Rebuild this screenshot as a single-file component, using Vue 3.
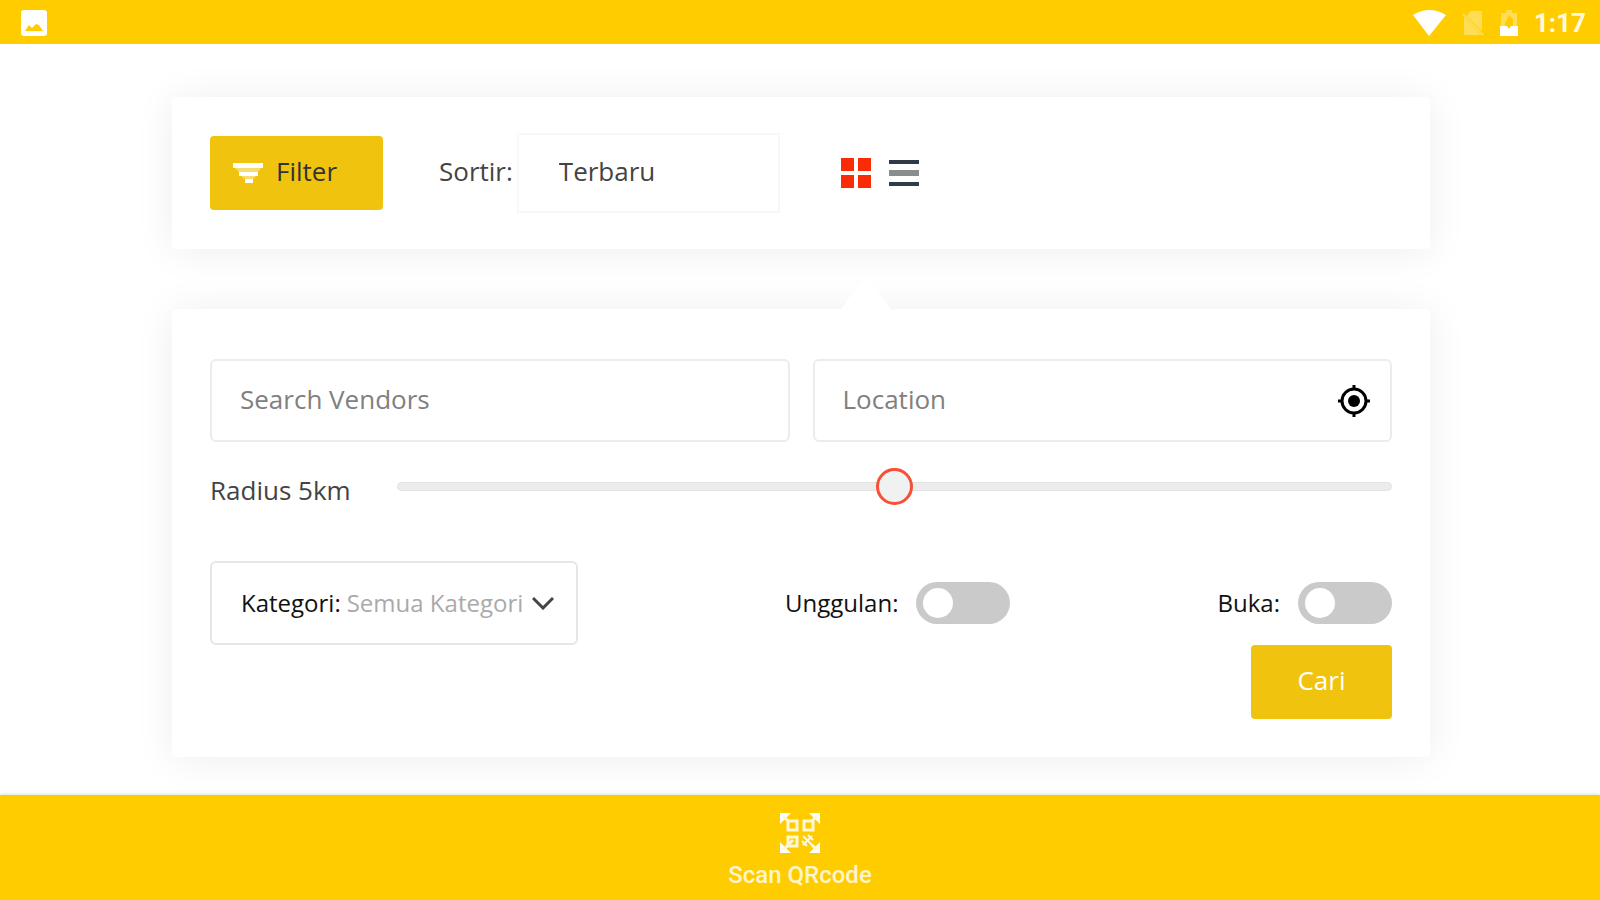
<template>
  <div class="app">
    <header class="status-bar">
      <svg class="status-photo" viewBox="0 0 26 26" aria-hidden="true">
        <rect x="0" y="0" width="26" height="26" rx="3" fill="#fff" />
        <path d="M4 21 L8 15 L11 18 L15 14 L18 15 L22 21 Z" fill="#ffcc00" />
      </svg>
      <div class="status-icons">
        <svg class="wifi" viewBox="0 0 33 26" aria-hidden="true">
          <path d="M0 5 Q16 -5 33 5 L16 26 Z" fill="#fff" />
        </svg>
        <svg class="sim" viewBox="0 0 22 26" aria-hidden="true">
          <path d="M8 1 H20 V21 L5 6 Z M2 7 L19 25 H2 Z" fill="#ffdd55" />
          <path d="M1 4 L21 25" stroke="#ffdd55" stroke-width="2" />
        </svg>
        <svg class="battery" viewBox="0 0 18 26" aria-hidden="true">
          <path d="M6 0 H12 V3 H17 V16 H1 V3 H6 Z" fill="#ffdd55" />
          <path d="M9 5 L5 13 V16 H13 V9 Z" fill="#ffcc00" />
          <path d="M0 16 H7 L9 19 L11 16 H18 V26 H0 Z" fill="#fff" />
        </svg>
        <span class="clock">1:17</span>
      </div>
    </header>

    <main class="content">
      <section class="card toolbar">
        <button type="button" class="btn btn-filter">
          <svg viewBox="0 0 30 20" aria-hidden="true">
            <path d="M0 0 H30 V5 H0 Z M6 9 H25 V13 H6 Z M12 16 H20 V20 H12 Z" fill="#fff" />
            <path d="M2 5 H28 L25 9 H6 Z M8 13 H23 L20 16 H12 Z" fill="#f8dc70" />
          </svg>
          <span>Filter</span>
        </button>

        <div class="sort">
          <label for="sort">Sortir:</label>
          <select id="sort" v-model="sort">
            <option v-for="s in sortOptions" :key="s">{{ s }}</option>
          </select>
        </div>

        <div class="views">
          <button type="button" aria-label="Grid" @click="view = 'grid'">
            <svg viewBox="0 0 30 30" :class="{ active: view === 'grid' }">
              <path d="M0 0 H13 V13 H0 Z M17 0 H30 V13 H17 Z M0 17 H13 V30 H0 Z M17 17 H30 V30 H17 Z" />
            </svg>
          </button>
          <button type="button" aria-label="List" @click="view = 'list'">
            <svg viewBox="0 0 30 30" :class="{ active: view === 'list' }">
              <path d="M0 2 H30 V6 H0 Z M0 24 H30 V28 H0 Z" />
              <path class="middle" d="M0 12 H30 V18 H0 Z" />
            </svg>
          </button>
        </div>
      </section>

      <form class="card filters" @submit.prevent>
        <div class="fields">
          <input v-model="vendor" class="field" type="text" placeholder="Search Vendors" aria-label="Search Vendors">
          <div class="field location">
            <input v-model="location" type="text" placeholder="Location" aria-label="Location">
            <button type="button" aria-label="Locate me">
              <svg viewBox="0 0 32 32">
                <circle cx="16" cy="16" r="12" fill="none" stroke="#000" stroke-width="3" />
                <circle cx="16" cy="16" r="6" fill="#000" />
                <path d="M16 0 V4 M16 28 V32 M0 16 H4 M28 16 H32" stroke="#000" stroke-width="3" />
              </svg>
            </button>
          </div>
        </div>

        <div class="radius">
          <label for="radius">Radius {{ radius }}km</label>
          <input id="radius" v-model="radius" type="range" min="0" max="10">
        </div>

        <div class="options">
          <div class="category">
            <label for="category">Kategori:</label>
            <select id="category" v-model="category">
              <option>Semua Kategori</option>
            </select>
            <svg viewBox="0 0 22 14" aria-hidden="true">
              <path d="M1 2 L11 12 L21 2" fill="none" stroke="#444" stroke-width="3" />
            </svg>
          </div>
          <label class="toggle">
            <span>Unggulan:</span>
            <input v-model="featured" type="checkbox">
          </label>
          <label class="toggle">
            <span>Buka:</span>
            <input v-model="open" type="checkbox">
          </label>
        </div>

        <button type="submit" class="btn btn-search"><span>Cari</span></button>
      </form>
    </main>

    <footer class="bottom-bar">
      <a href="#">
        <svg viewBox="0 0 40 40" aria-hidden="true">
          <path d="M0 0 H11 L0 11 Z M29 0 H40 V11 Z M0 29 V40 H11 Z M40 29 V40 H29 Z" fill="#fff" />
          <g fill="none" stroke="#fff8d8" stroke-width="3">
            <rect x="8" y="8" width="9" height="9" />
            <rect x="24" y="8" width="9" height="9" />
            <rect x="8" y="24" width="9" height="9" />
            <path d="M3 3 L8 8 M37 3 L32 8 M3 37 L13 27 M37 37 L32 32" />
            <path d="M23 23 L33 33 M28 22 L33 27 M22 28 L27 33 M23 32 L32 23" stroke-width="2" />
          </g>
        </svg>
        <span>Scan QRcode</span>
      </a>
    </footer>
  </div>
</template>

<script setup>
import { ref } from "vue"

const sortOptions = ["Terbaru", "Terlama"]

const sort = ref("Terbaru")
const view = ref("grid")
const vendor = ref("")
const location = ref("")
const radius = ref(5)
const category = ref("Semua Kategori")
const featured = ref(false)
const open = ref(false)
</script>

<style>
  body {
    background: #fff;
  }
</style>

<style scoped>
  .app,
  .app * {
    box-sizing: border-box;
  }

  .app {
    min-height: 100vh;
    display: flex;
    flex-direction: column;
    font-family: "Open Sans", "Noto Sans", sans-serif;
    font-size: 26px;
    line-height: 36px;
    color: #444;
  }

  svg {
    display: block;
    flex-shrink: 0;
  }

  button,
  input,
  select {
    margin: 0;
    padding: 0;
    border: none;
    background: transparent;
    font: inherit;
    color: inherit;
  }

  button {
    cursor: pointer;
  }

  select {
    appearance: none;
  }

  .status-bar {
    display: flex;
    justify-content: space-between;
    align-items: center;
    height: 44px;
    padding: 2px 14px 0 21px;
    background: #ffcc00;
  }

  .status-photo {
    width: 26px;
    height: 26px;
  }

  .status-icons {
    display: flex;
    align-items: center;
    gap: 16px;
  }

  .wifi {
    width: 33px;
    height: 26px;
  }

  .sim {
    width: 22px;
    height: 26px;
  }

  .battery {
    width: 18px;
    height: 26px;
  }

  .clock {
    font-family: Roboto, sans-serif;
    font-size: 26px;
    font-weight: 700;
    color: #fff8e0;
  }

  .content {
    flex: 1;
    display: flex;
    flex-direction: column;
    gap: 60px;
    padding: 53px 170px 38px 172px;
  }

  .card {
    background: #fff;
    border-radius: 4px;
    box-shadow: 0 2px 40px rgba(0, 0, 0, 0.07);
  }

  .toolbar {
    display: flex;
    align-items: center;
    padding: 36px 38px;
  }

  .btn {
    display: flex;
    align-items: center;
    height: 74px;
    border-radius: 4px;
    background: #f0c30f;
  }

  .btn span {
    padding-bottom: 4px;
  }

  .btn-filter {
    gap: 13px;
    width: 173px;
    padding-left: 23px;
    color: #333;
  }

  .btn-filter svg {
    width: 30px;
    height: 20px;
  }

  .sort {
    display: flex;
    align-items: center;
    gap: 4px;
    margin-left: 56px;
  }

  .sort label {
    padding-bottom: 4px;
  }

  .sort select {
    width: 263px;
    height: 80px;
    padding: 0 40px 4px;
    border: 2px solid #f8f8f8;
  }

  .views {
    display: flex;
    gap: 18px;
    margin-left: 61px;
  }

  .views svg {
    width: 30px;
    height: 30px;
    fill: #2f3b47;
  }

  .views .middle {
    fill: #8a8d90;
  }

  .views svg.active {
    fill: #fa2c08;
  }

  .filters {
    position: relative;
    padding: 50px 38px 38px;
  }

  /* pointer towards the toolbar */
  .filters::before {
    content: "";
    position: absolute;
    left: calc(50% + 40px);
    bottom: 100%;
    width: 50px;
    height: 34px;
    background: #fff;
    clip-path: polygon(50% 0, 100% 100%, 0 100%);
  }

  .fields {
    display: grid;
    grid-template-columns: 1fr 1fr;
    gap: 23px;
  }

  .field {
    width: 100%;
    height: 83px;
    padding: 0 28px 4px;
    border: 2px solid #ececec;
    border-radius: 6px;
  }

  .location {
    display: flex;
    align-items: center;
    padding: 0 20px 0 28px;
  }

  .location input {
    flex: 1;
    min-width: 0;
    padding-bottom: 4px;
  }

  .location svg {
    width: 32px;
    height: 32px;
  }

  input::placeholder {
    color: #808080;
  }

  .radius {
    display: flex;
    align-items: flex-start;
    margin-top: 25px;
  }

  .radius label {
    width: 187px;
    line-height: 46px;
  }

  .radius input {
    flex: 1;
    appearance: none;
    height: 38px;
  }

  .radius input::-webkit-slider-runnable-track {
    height: 9px;
    border: 1px solid #e2e2e2;
    border-radius: 5px;
    background: #ececec;
  }

  .radius input::-webkit-slider-thumb {
    appearance: none;
    width: 37px;
    height: 37px;
    margin-top: -15px;
    border: 3px solid #f84f38;
    border-radius: 50%;
    background: #f0f1f1;
  }

  .options {
    display: flex;
    justify-content: space-between;
    align-items: center;
    margin-top: 48px;
    font-size: 24px;
  }

  .category {
    display: flex;
    align-items: center;
    width: 368px;
    height: 84px;
    padding: 0 22px 0 29px;
    border: 2px solid #e6e6e6;
    border-radius: 6px;
    color: #111;
  }

  .category select {
    flex: 1;
    min-width: 0;
    margin-left: 6px;
    color: #aaa;
  }

  .category svg {
    width: 22px;
    height: 14px;
  }

  .toggle {
    display: flex;
    align-items: center;
    gap: 18px;
    color: #111;
  }

  .toggle input {
    appearance: none;
    display: flex;
    align-items: center;
    width: 94px;
    height: 42px;
    padding: 0 7px;
    border-radius: 21px;
    background: #cacaca;
  }

  .toggle input::before {
    content: "";
    width: 30px;
    height: 30px;
    border-radius: 50%;
    background: #fff;
  }

  .toggle input:checked {
    justify-content: flex-end;
    background: #f0c30f;
  }

  .btn-search {
    justify-content: center;
    width: 141px;
    margin-left: auto;
    color: #fff;
  }

  .bottom-bar {
    display: flex;
    justify-content: center;
    height: 105px;
    padding-top: 18px;
    background: #ffcc00;
    box-shadow: 0 0 4px rgba(0, 0, 0, 0.2);
  }

  .bottom-bar a {
    display: flex;
    flex-direction: column;
    align-items: center;
    gap: 4px;
    font-family: Roboto, sans-serif;
    font-size: 24px;
    font-weight: 500;
    color: #fff5cc;
    text-decoration: none;
  }

  .bottom-bar svg {
    width: 40px;
    height: 40px;
  }
</style>
